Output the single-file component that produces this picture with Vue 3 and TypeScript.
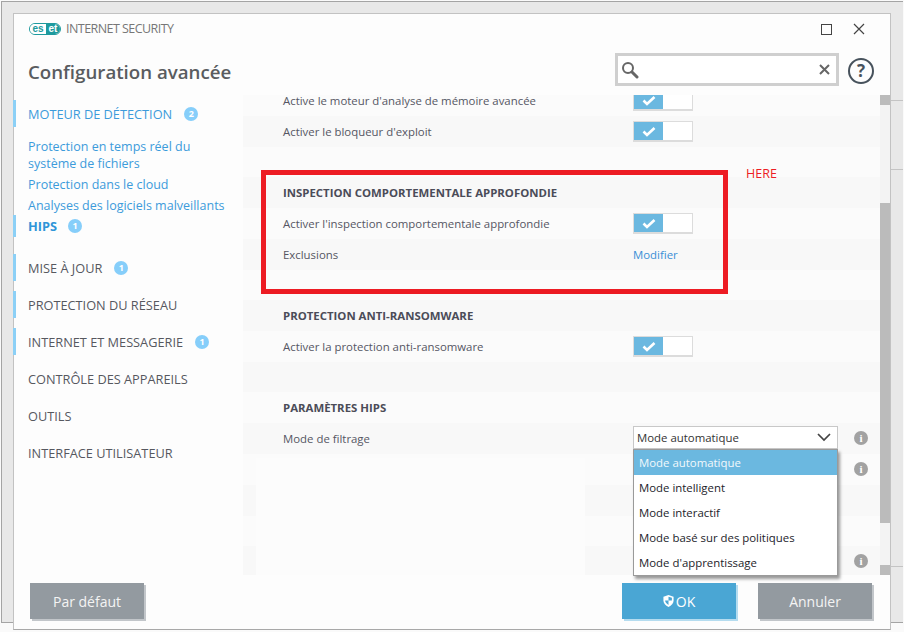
<script setup lang="ts">
interface NavItem { label: string; badge?: number; bar?: boolean }
const primary: NavItem[] = [
  { label: 'MISE À JOUR', badge: 1, bar: true },
  { label: 'PROTECTION DU RÉSEAU', bar: true },
  { label: 'INTERNET ET MESSAGERIE', badge: 1, bar: true },
  { label: 'CONTRÔLE DES APPAREILS' },
  { label: 'OUTILS' },
  { label: 'INTERFACE UTILISATEUR' },
]
const links = ['Protection dans le cloud', 'Analyses des logiciels malveillants']
const options = ['Mode automatique', 'Mode intelligent', 'Mode interactif', 'Mode basé sur des politiques', "Mode d'apprentissage"]
interface Row { text?: string; kind?: 'head' | 'toggle' | 'link' | 'select' | 'info'; short?: boolean }
const rows: Row[] = [
  { text: "Active le moteur d'analyse de mémoire avancée", kind: 'toggle' },
  { text: "Activer le bloqueur d'exploit", kind: 'toggle' },
  { short: true },
  { text: 'INSPECTION COMPORTEMENTALE APPROFONDIE', kind: 'head' },
  { text: "Activer l'inspection comportementale approfondie", kind: 'toggle' },
  { text: 'Exclusions', kind: 'link' },
  { short: true },
  { text: 'PROTECTION ANTI-RANSOMWARE', kind: 'head' },
  { text: 'Activer la protection anti-ransomware', kind: 'toggle' },
  { short: true },
  { text: 'PARAMÈTRES HIPS', kind: 'head' },
  { text: 'Mode de filtrage', kind: 'select' },
  { kind: 'info' },
  {},
  { short: true },
  { kind: 'info' },
]
</script>

<template>
  <div class="desktop">
    <div class="behind">
      <i class="tick t1"></i><i class="tick t2"></i><i class="tick t3"></i>
    </div>
    <div class="window">
      <header class="head">
        <div class="topbar">
          <div class="brand">
            <span class="logo"><span class="es">es</span><span class="et">et</span></span>
            <span class="product">INTERNET SECURITY</span>
          </div>
          <div class="winbtns">
            <span class="maxbtn"></span>
            <svg class="closebtn" width="12" height="12" viewBox="0 0 12 12"><path d="M1 1l10 10M11 1L1 11" stroke="#444" stroke-width="1.2" fill="none" /></svg>
          </div>
        </div>
        <div class="titlebar">
          <h1 class="title">Configuration avancée</h1>
          <div class="search">
            <svg width="18" height="18" viewBox="0 0 18 18"><circle cx="7" cy="7" r="5" fill="none" stroke="#666" stroke-width="2" /><path d="M11 11l5 5" stroke="#666" stroke-width="3" stroke-linecap="round" /></svg>
            <svg width="11" height="11" viewBox="0 0 11 11"><path d="M1 1l9 9M10 1l-9 9" stroke="#666" stroke-width="2" fill="none" /></svg>
          </div>
          <div class="help">?</div>
        </div>
      </header>

      <div class="main">
        <nav class="side">
          <div class="nav bar blue"><span>MOTEUR DE DÉTECTION</span><b class="badge">2</b></div>
          <div class="subs">
            <a class="sub">Protection en temps réel du<br />système de fichiers</a>
            <a v-for="l in links" :key="l" class="sub">{{ l }}</a>
          </div>
          <div class="nav hips bar"><span>HIPS</span><b class="badge">1</b></div>
          <div class="list">
            <div v-for="n in primary" :key="n.label" class="nav" :class="{ bar: n.bar }">
              <span>{{ n.label }}</span><b v-if="n.badge" class="badge">{{ n.badge }}</b>
            </div>
          </div>
        </nav>

        <section class="pane">
          <div class="viewport">
            <div class="rows">
              <div v-for="(r, i) in rows" :key="i" class="row" :class="{ even: i % 2 === 1, first: i === 0, short: r.short }">
                <span class="label" :class="{ heading: r.kind === 'head' }">{{ r.text }}</span>
                <div v-if="r.kind === 'toggle'" class="toggle">
                  <span class="on"><svg width="14" height="11" viewBox="0 0 14 11"><path d="M1.5 5.5l3.5 3.5 7.5-7" fill="none" stroke="#fff" stroke-width="2.6" /></svg></span>
                </div>
                <a v-else-if="r.kind === 'link'" class="modify">Modifier</a>
                <div v-else-if="r.kind === 'select'" class="select">
                  <span>Mode automatique</span>
                  <svg width="14" height="9" viewBox="0 0 14 9"><path d="M1 1l6 6 6-6" fill="none" stroke="#444" stroke-width="1.7" /></svg>
                </div>
                <span v-if="r.kind === 'select' || r.kind === 'info'" class="info">i</span>
              </div>
            </div>
            <div class="blank"></div>
          </div>
          <ul class="menu">
            <li v-for="(o, i) in options" :key="o" :class="{ sel: i === 0 }">{{ o }}</li>
          </ul>
          <div class="redbox"></div>
          <span class="here">HERE</span>
          <div class="scroll">
            <i class="cap"></i><i class="track a"></i><i class="thumb"></i><i class="track b"></i><i class="cap"></i>
          </div>
        </section>
      </div>

      <footer class="foot">
        <button class="btn grey">Par défaut</button>
        <span class="spacer"></span>
        <button class="btn ok">
          <svg width="11" height="14" viewBox="0 0 13 15"><path d="M6.5 .5L12.5 2.5V7c0 3.5-2.5 6-6 7.5C3 13 .5 10.5.5 7V2.5z" fill="#fff" /><path d="M6.5 2.5V7H2.5c.2 2.5 1.8 4 4 5.2V7h4V3.8z" fill="#4aa6d4" /></svg>
          <span>OK</span>
        </button>
        <button class="btn grey">Annuler</button>
      </footer>
    </div>
  </div>
</template>

<style>
html, body { margin: 0; padding: 0; background: #fafafa; }
</style>

<style scoped>
.desktop {
  position: relative;
  width: 904px;
  height: 632px;
  overflow: hidden;
  font-family: "Open Sans", "Noto Sans", sans-serif;
  box-sizing: border-box;
  padding: 13px 0 0 13px;
}
.behind {
  position: absolute;
  left: 1px;
  top: 1px;
  width: 901px;
  height: 620px;
  background: #e8e8e8;
  border-left: 1px solid #a4a4a4;
  border-top: 1px solid #a4a4a4;
  border-bottom: 1px solid #a4a4a4;
}
.tick { position: absolute; left: 889px; width: 12px; height: 1px; background: #c4c4c4; }
.t1 { top: 98px; }
.t2 { top: 167px; }
.t3 { top: 564px; }
.window {
  position: relative;
  width: 878px;
  height: 617px;
  box-sizing: border-box;
  border: 1px solid #c2c2c2;
  border-bottom-color: #a8a8a8;
  background: #fdfdfd;
  display: flex;
  flex-direction: column;
}
.head { height: 81px; flex: none; display: flex; flex-direction: column; }
.topbar { height: 39px; box-sizing: border-box; display: flex; justify-content: space-between; align-items: flex-start; padding: 7px 25px 0 15px; }
.brand { display: flex; align-items: center; gap: 5px; }
.logo {
  width: 32px;
  height: 12px;
  border: 1px solid #1e9a9e;
  border-radius: 6px;
  box-sizing: border-box;
  display: flex;
  overflow: hidden;
  font: 700 10px/10px "Liberation Sans", sans-serif;
}
.es { width: 16px; text-align: center; color: #1e9a9e; background: #fff; }
.et { flex: 1; text-align: center; color: #fff; background: #1e9a9e; }
.product { font-size: 12.5px; line-height: 16px; color: #777; letter-spacing: -0.55px; }
.winbtns { display: flex; align-items: center; gap: 21px; padding-top: 2px; }
.maxbtn { width: 9px; height: 9px; border: 1px solid #444; }
.titlebar { display: flex; align-items: flex-start; padding-left: 14px; }
.title { margin: 6px 0 0; font-size: 18.7px; line-height: 26px; font-weight: 600; color: #595c60; flex: 1; }
.search {
  width: 224px;
  height: 33px;
  box-sizing: border-box;
  border: 3px solid #cfcfcf;
  background: #fff;
  display: flex;
  align-items: center;
  justify-content: space-between;
  padding: 0 6px 0 3px;
}
.help {
  width: 26px;
  height: 26px;
  box-sizing: border-box;
  margin: 5px 16px 0 9px;
  border: 2px solid #47525c;
  border-radius: 50%;
  text-align: center;
  font: 700 17px/22px "Open Sans", sans-serif;
  color: #47525c;
}
.main { height: 480px; flex: none; display: flex; }
.side { width: 229px; flex: none; padding-top: 5px; box-sizing: border-box; }
.nav {
  height: 27px;
  display: flex;
  align-items: center;
  gap: 12px;
  padding: 1px 0 0 14px;
  box-sizing: border-box;
  font-size: 12.75px;
  color: #56585f;
}
.nav.bar { border-left: 3px solid #8cd0f6; margin-left: -1px; padding-left: 12px; }
.blue { color: #3c9bdb; }
.badge {
  width: 14px;
  height: 14px;
  border-radius: 50%;
  background: #86cefa;
  color: #fff;
  font-size: 9px;
  font-weight: 700;
  line-height: 14px;
  text-align: center;
}
.subs { padding: 11px 0 0 14px; display: flex; flex-direction: column; gap: 4px; }
.sub { font-size: 12.5px; line-height: 17px; color: #3c9bdb; }
.hips { height: 22px; margin-top: 1px; padding-top: 0; gap: 11px; font-weight: 700; color: #2f95d8; }
.list { display: flex; flex-direction: column; gap: 10px; margin-top: 17px; }

.pane { position: relative; flex: 1; display: flex; }
.viewport { position: relative; flex: 1; overflow: hidden; }
.row {
  height: 31px;
  display: flex;
  align-items: center;
  padding-left: 40px;
  background: #fbfbfb;
  position: relative;
}
.row.short { height: 30px; }
.row.even { background: #f8f8f8; }
.row.first { height: 21px; align-items: flex-end; }
.row.first .label { line-height: 12px; margin-bottom: 9px; }
.row.first .toggle { margin-bottom: 5px; flex: none; }
.label { width: 350px; flex: none; font-size: 11.4px; color: #555663; white-space: nowrap; }
.heading { font-weight: 700; color: #4b4c58; }
.toggle {
  width: 60px;
  height: 21px;
  box-sizing: border-box;
  border: 1px solid #dcdcdc;
  border-width: 1px 1px 2px 1px;
  background: #fff;
}
.on {
  width: 29px;
  height: 100%;
  background: #6bb8e0;
  display: flex;
  align-items: center;
  justify-content: center;
}
.modify { font-size: 11.4px; color: #3a8fd6; }
.select {
  width: 205px;
  height: 23px;
  margin-bottom: 2px;
  box-sizing: border-box;
  border: 1px solid #c8c8c8;
  background: #fff;
  display: flex;
  align-items: center;
  justify-content: space-between;
  padding: 0 6px 0 3px;
  font-size: 11.4px;
  color: #333;
}
.info {
  position: absolute;
  left: 611px;
  width: 14px;
  height: 14px;
  margin-top: -1px;
  border-radius: 50%;
  background: #a2a2a2;
  color: #fff;
  font: 700 11px/14px "Liberation Serif", serif;
  text-align: center;
}
.blank { position: absolute; left: 13px; top: 363px; width: 329px; bottom: 0; background: #fcfcfc; }
.menu {
  position: absolute;
  left: 390px;
  top: 354px;
  width: 205px;
  margin: 0;
  padding: 0;
  list-style: none;
  box-sizing: border-box;
  border: 1px solid #9a9a9a;
  background: #fff;
  box-shadow: 2px 3px 3px rgba(0, 0, 0, 0.4);
  z-index: 2;
}
.menu li { height: 25px; padding-left: 5px; font-size: 11.4px; line-height: 25px; color: #1c1c2a; }
.menu li.sel { background: #6bb8e0; color: #f2f8fc; }
.redbox {
  position: absolute;
  left: 18px;
  top: 75px;
  width: 467px;
  height: 124px;
  box-sizing: border-box;
  border: 5px solid #ed1c24;
}
.here { position: absolute; left: 503px; top: 70px; font-size: 12.5px; color: #ed1c24; }
.scroll { width: 10px; flex: none; display: flex; flex-direction: column; background: #f3f3f3; position: relative; }
.scroll i { display: block; }
.cap { height: 10px; background: #bbb; }
.track.a { height: 98px; }
.thumb { height: 320px; background: #bbb; }
.track.b { height: 42px; }

.foot { flex: 1; display: flex; align-items: flex-start; gap: 22px; padding: 8px 18px 0 16px; }
.spacer { flex: 1; }
.btn {
  width: 114px;
  height: 36px;
  border: 0;
  padding: 0;
  font: 400 14px "Open Sans", sans-serif;
  color: #f4f4f4;
  display: flex;
  align-items: center;
  justify-content: center;
  gap: 2px;
}
.grey { background: #939aa0; box-shadow: 2px 2px 0 #c2c6ca; }
.ok { background: #4aa6d4; box-shadow: 2px 2px 0 #b5dcef; color: #fff; }
</style>
